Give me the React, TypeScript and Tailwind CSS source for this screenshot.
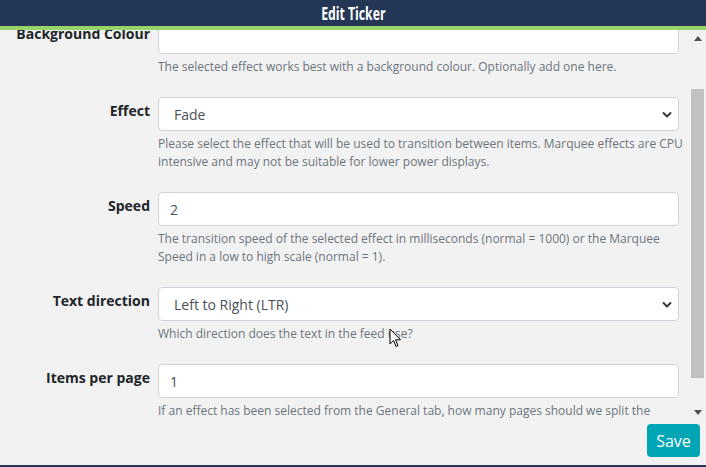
import React from "react";

function Chevron() {
  return (
    <svg width="10" height="8" viewBox="0 0 10 8" className="absolute right-[6px] top-[13px]">
      <path d="M1.5 2 L5 5.5 L8.5 2" fill="none" stroke="#343a40" strokeWidth="2" strokeLinecap="round" strokeLinejoin="round" />
    </svg>
  );
}

function Row({ label, children, help }: { label: string; children: React.ReactNode; help: React.ReactNode }) {
  return (
    <div className="flex mb-[21px]">
      <div className="w-[150px] shrink-0 text-right font-bold text-[14px] leading-[20px] pt-[4px] text-[#212529]">{label}</div>
      <div className="ml-[8px] flex-1 min-w-0 flex flex-col">
        {children}
        <div className="mt-[4px] text-[12px] leading-[18px] text-[#6c757d] whitespace-nowrap">{help}</div>
      </div>
    </div>
  );
}

function Input({ value }: { value: string }) {
  return (
    <div className="h-[34px] bg-white border border-[#ced4da] rounded-[4px] pl-[11px] flex items-center text-[14px] text-[#495057]">{value}</div>
  );
}

function Select({ value }: { value: string }) {
  return (
    <div className="relative h-[34px] bg-white border border-[#ced4da] rounded-[4px] pl-[15px] flex items-center text-[14px] text-[#495057]">
      {value}
      <Chevron />
    </div>
  );
}

export default function App() {
  return (
    <div className="w-[706px] h-[467px] bg-[#f2f2f2] flex flex-col overflow-hidden relative" style={{ fontFamily: '"Open Sans", sans-serif' }}>
      <div className="h-[26px] bg-[#243656] flex items-center justify-center shrink-0 z-10">
        <span className="inline-block text-white font-bold text-[18px] leading-none scale-x-[0.68]">Edit Ticker</span>
      </div>
      <div className="h-[4px] bg-[#97d568] shrink-0 z-10" />
      <div className="flex-1 flex min-h-0">
        <div className="flex-1 min-w-0 overflow-hidden pr-[10px]">
          <div className="-mt-[10px]">
            <Row label="Background Colour" help="The selected effect works best with a background colour. Optionally add one here.">
              <Input value="" />
            </Row>
            <Row label="Effect" help={<>Please select the effect that will be used to transition between items. Marquee effects are CPU<br />intensive and may not be suitable for lower power displays.</>}>
              <Select value="Fade" />
            </Row>
            <Row label="Speed" help={<>The transition speed of the selected effect in milliseconds (normal = 1000) or the Marquee<br />Speed in a low to high scale (normal = 1).</>}>
              <Input value="2" />
            </Row>
            <Row label="Text direction" help="Which direction does the text in the feed use?">
              <Select value="Left to Right (LTR)" />
            </Row>
            <Row label="Items per page" help={<>If an effect has been selected from the General tab, how many pages should we split the<br />items across? If you don't enter anything here 1 item will be put on each page.</>}>
              <Input value="1" />
            </Row>
          </div>
        </div>
        <div className="w-[17px] shrink-0 bg-[#f1f1f1] flex flex-col items-center pb-[2px]">
          <div className="h-[17px] flex items-center justify-center">
            <svg width="8" height="5" viewBox="0 0 8 5"><path d="M0 5 L4 0 L8 5 Z" fill="#505050" /></svg>
          </div>
          <div className="h-[42px]" />
          <div className="w-[13px] h-[289px] bg-[#c1c1c1]" />
          <div className="flex-1" />
          <div className="h-[17px] flex items-center justify-center">
            <svg width="8" height="5" viewBox="0 0 8 5"><path d="M0 0 L8 0 L4 5 Z" fill="#505050" /></svg>
          </div>
        </div>
      </div>
      <div className="h-[42px] shrink-0 flex justify-end items-start pt-[1px] pr-[6px]">
        <button className="w-[53px] h-[33px] bg-[#00a5b6] rounded-[4px] text-white text-[16px]">Save</button>
      </div>
      <div className="h-[2px] bg-[#243656] shrink-0" />
      <svg className="absolute left-[389px] top-[328px]" width="14" height="21" viewBox="0 0 14 21">
        <path d="M1 1 L1 16 L4.5 12.5 L7 18.5 L9 17.5 L6.5 11.8 L11.5 11.8 Z" fill="#fff" stroke="#000" strokeWidth="1" strokeLinejoin="miter" />
      </svg>
    </div>
  );
}
